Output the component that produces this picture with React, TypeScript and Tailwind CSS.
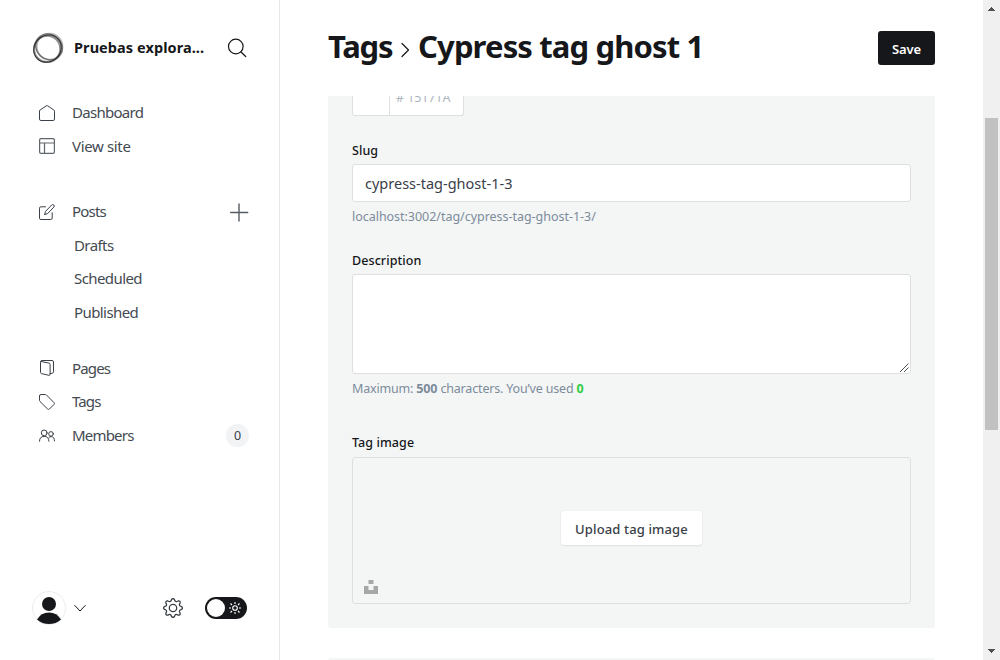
import type { ReactNode } from "react";

const stroke = { fill: "none", stroke: "currentColor", strokeLinecap: "round", strokeLinejoin: "round" } as const;

function Icon({ children }: { children: ReactNode }) {
  return (
    <svg className="h-4 w-4 shrink-0" viewBox="0 0 16 16" strokeWidth={1} {...stroke}>
      {children}
    </svg>
  );
}

const HomeIcon = () => (
  <Icon>
    <path d="M.5 6.200v7.900q0 1.400 1.400 1.400h12.200q1.400 0 1.400-1.400V6.200q0-.8-.6-1.200L8.800.9Q8 .3 7.200.9L1.100 5Q.5 5.400.5 6.200z" />
  </Icon>
);
const LayoutIcon = () => (
  <Icon>
    <g strokeWidth="1.200" opacity=".8">
      <rect x=".6" y=".6" width="14.800" height="14.800" rx="1.400" />
      <path d="M.6 5h14.800M5.500 5v10.400" />
    </g>
  </Icon>
);
const EditIcon = () => (
  <Icon>
    <path d="M13.200 8.800v5.300q0 1.400-1.400 1.400H1.900Q.5 15.500.5 14.100V4.200Q.5 2.800 1.900 2.800H6.500" />
    <path d="M5.800 10.400l.7-3L12.700 1q.9-.9 2-.1 1.100 1.100.1 2.200L8.700 9.600l-2.900.8z" />
  </Icon>
);
const PagesIcon = () => (
  <Icon>
    <path d="M2 1.500l8.200 1.600q.9.300.9 1.200v10q0 1.200-1.200 1L2.500 13.600q-1-.3-1-1.300V2.200Q1.500.5 3 .5h10q1.500 0 1.500 1.500v9.800q0 1.200-1.100 1.400l-2.300.4" />
  </Icon>
);
const TagIcon = () => (
  <Icon>
    <path d="M.5 2v4.400q0 .6.400 1L8.600 15q.9.900 1.800 0l4.600-4.600q.9-.9 0-1.800L7.400.9q-.4-.4-1-.4H2Q.5.500.5 2z" />
  </Icon>
);
const MembersIcon = () => (
  <Icon>
    <circle cx="5.200" cy="5.900" r="2.900" />
    <circle cx="12" cy="6.900" r="2.300" />
    <path d="M.5 14.200q0-4.800 4.700-4.800t4.700 4.800M10 10.400q1-.8 2-.8 3.500 0 3.500 4.300" />
  </Icon>
);

function NavItem({ icon, text, label, children }: { icon: ReactNode; text: string; label: string; children?: ReactNode }) {
  return (
    <div className="flex h-[33.500px] items-center pr-[30px] pl-[39px] text-[#394047]">
      {icon}
      <span className={"ml-[17px] text-[15px] whitespace-nowrap text-[#434a51] " + text}>{label}</span>
      {children}
    </div>
  );
}

function SubItem({ label }: { label: string }) {
  return <div className="h-[33.500px] pl-[74px] text-[15px] leading-[33px] tracking-[-0.580px] text-[#434a51]">{label}</div>;
}

function Sidebar() {
  return (
    <aside className="flex w-[280px] shrink-0 flex-col border-r border-[#e5e8ea]">
      <div className="flex h-[96px] items-center pl-8">
        <svg className="h-8 w-8" viewBox="0 0 32 32" fill="none" stroke="#333">
          <ellipse cx="15.500" cy="16.600" rx="14.300" ry="13" strokeWidth="1.100" transform="rotate(-40 15.500 16.600)" />
          <ellipse cx="17" cy="14.900" rx="14" ry="12.300" strokeWidth="1.400" opacity=".55" transform="rotate(40 17 14.900)" />
          <ellipse cx="15.200" cy="16.900" rx="13.100" ry="13.200" strokeWidth="2" opacity=".55" />
          <ellipse cx="17.500" cy="14.700" rx="12.900" ry="13" strokeWidth="2" opacity=".35" />
        </svg>
        <span className="ml-[10px] w-[132px] text-[14.500px] font-bold tracking-[0.070px] whitespace-nowrap text-[#15171a]">Pruebas explora...</span>
        <svg className="ml-[21px] h-5 w-5 text-[#15171a]" viewBox="0 0 20 20" strokeWidth="1.200" {...stroke}>
          <circle cx="8.800" cy="8.500" r="7.300" />
          <path d="M14 14l4.700 4.500" />
        </svg>
      </div>
      <nav className="flex flex-1 flex-col">
        <NavItem icon={<HomeIcon />} label="Dashboard" text="-mt-0.5 tracking-[-0.710px]" />
        <NavItem icon={<LayoutIcon />} label="View site" text="tracking-[-0.350px]" />
        <div className="h-8" />
        <NavItem icon={<EditIcon />} label="Posts" text="-mt-0.5 tracking-[-0.800px]">
          <svg className="mt-px ml-auto h-[19px] w-[19px]" viewBox="0 0 19 19" strokeWidth="1.400" opacity=".85" {...stroke}>
            <path d="M9 1v17M.7 9.500h17" />
          </svg>
        </NavItem>
        <SubItem label="Drafts" />
        <SubItem label="Scheduled" />
        <SubItem label="Published" />
        <div className="h-[22.500px]" />
        <NavItem icon={<PagesIcon />} label="Pages" text="-mt-px tracking-[-0.850px]" />
        <NavItem icon={<TagIcon />} label="Tags" text="-mt-px tracking-[-0.850px]" />
        <NavItem icon={<MembersIcon />} label="Members" text="-mt-px tracking-[-0.800px]">
          <span className="ml-auto flex h-[23px] w-[23px] items-center justify-center rounded-full bg-[#f1f3f4] pt-[2px] text-[12.500px] text-[#394047]">0</span>
        </NavItem>
      </nav>
      <div className="mb-[35px] flex h-[34px] items-center pl-8">
        <svg className="h-[34px] w-[34px]" viewBox="0 0 34 34">
          <circle cx="17" cy="17" r="16.500" fill="#fff" stroke="#e5e8ea" strokeWidth=".8" />
          <circle cx="17" cy="13" r="7" fill="#15171a" />
          <path d="M5 28.500Q9 21.500 17 21.500t12 7Q24 33 17 33T5 28.500z" fill="#15171a" />
        </svg>
        <svg className="ml-2 h-3 w-3 text-[#15171a]" viewBox="0 0 12 12" {...stroke}>
          <path d="M.8 3.500L6 9l5.200-5.500" />
        </svg>
        <svg className="ml-[77px] h-5 w-5 text-[#394047]" viewBox="0 0 20 20" strokeWidth="1.300" {...stroke}>
          <circle cx="10" cy="10" r="3.700" />
          <path d="M8.600 1.500Q10-.3 11.400 1.500L12 2.900q.7 1.100 2 .6l1.200-.5q2.300-.4 1.900 1.900l-.5 1.200q-.5 1.300.6 1.900l1.300.6q1.800 1.400 0 2.800l-1.300.6q-1.100.7-.6 2l.5 1.200q.4 2.200-1.900 1.900l-1.200-.5q-1.300-.5-2 .6l-.6 1.300q-1.400 1.800-2.800 0L8 17.200q-.7-1.100-2-.6l-1.200.5q-2.200.3-1.900-1.900l.5-1.200q.5-1.300-.6-2l-1.300-.6q-1.800-1.400 0-2.800L2.800 8q1.100-.6.6-1.900l-.5-1.200Q2.600 2.600 4.800 3l1.200.5q1.300.5 2-.6z" />
        </svg>
        <div className="ml-[22px] flex h-[22px] w-[42px] items-center rounded-full bg-[#15171a] pl-[2px]">
          <div className="h-[18px] w-[18px] rounded-full bg-white" />
          <svg className="ml-1 h-3 w-3" viewBox="0 0 12 12" fill="none" stroke="#fff" strokeWidth="1.100">
            <circle cx="6" cy="6" r="2.300" />
            <path d="M6 0v2M6 10v2M0 6h2M10 6h2M1.500 1.500l1.500 1.500M9 9l1.500 1.500M10.500 1.500L9 3M3 9l-1.500 1.500" />
          </svg>
        </div>
      </div>
    </aside>
  );
}

function Scrollbar() {
  return (
    <div className="flex h-full w-[17px] shrink-0 flex-col items-center bg-[#f0f0f0]">
      <svg className="h-[118px] w-[17px]" viewBox="0 0 17 118" shapeRendering="crispEdges">
        <path d="M5 11h7L8.500 7z" fill="#505050" />
      </svg>
      <div className="h-[312px] w-[13px] bg-[#c1c1c1]" />
      <svg className="mt-auto h-[17px] w-[17px]" viewBox="0 0 17 17" shapeRendering="crispEdges">
        <path d="M5 6h7L8.500 10z" fill="#505050" />
      </svg>
    </div>
  );
}

function Label({ children }: { children: ReactNode }) {
  return <div className="pt-px text-[12.500px] leading-[20px] font-medium tracking-[0.080px] text-[#15171a]">{children}</div>;
}

export default function App() {
  return (
    <div className="flex h-[660px] w-[1000px] overflow-hidden bg-white font-['Noto_Sans','Open_Sans',sans-serif]">
      <Sidebar />
      <main className="flex min-w-0 flex-1 flex-col pr-12 pl-12">
        <header className="flex h-[96px] shrink-0 items-center justify-between">
          <h1 className="flex items-center pb-1 text-[31px] leading-[40px] font-bold whitespace-nowrap text-[#15171a]">
            <span className="w-[65px] tracking-[-1.200px]">Tags</span>
            <svg className="mt-[7px] ml-[7px] h-4 w-[11px]" viewBox="0 0 11 16" strokeWidth="1.200" {...stroke}>
              <path d="M2 1.500L8.500 8 2 14.500" />
            </svg>
            <span className="ml-[7px] tracking-[-0.860px]">Cypress tag ghost 1</span>
          </h1>
          <button className="h-[34px] w-[57px] rounded-[3px] bg-[#15171a] pt-[3px] text-[13px] font-semibold tracking-[-0.100px] text-white">Save</button>
        </header>
        <div className="flex flex-1 flex-col overflow-hidden">
          <section className="h-[532px] shrink-0 rounded-b-[3px] bg-[#f4f6f6] px-6">
            <div className="flex h-[20px] w-[112px] overflow-hidden rounded-b-[3px] border border-t-0 border-[#dddfe1] bg-white">
              <div className="w-[37px] border-r border-[#dddfe1]" />
              <span className="-mt-[7px] ml-[6px] text-[12.500px] leading-[18px] tracking-[-0.100px] whitespace-nowrap text-[#abb4be]"># 15171A</span>
            </div>
            <div className="mt-[24px] h-[24px]">
              <Label>Slug</Label>
            </div>
            <div className="h-[38px] rounded-[3px] border border-[#dddfe1] bg-white px-3 text-[14.500px] leading-[37px] text-[#394047]">cypress-tag-ghost-1-3</div>
            <div className="mt-[5px] h-[19px] text-[12.500px] leading-5 tracking-[-0.030px] text-[#7c8b9a]">localhost:3002/tag/cypress-tag-ghost-1-3/</div>
            <div className="mt-[24px] h-[24px]">
              <Label>Description</Label>
            </div>
            <div className="flex h-[100px] items-end justify-end rounded-[3px] border border-[#dddfe1] bg-white">
              <svg className="h-[10px] w-[10px]" viewBox="0 0 10 10" stroke="#555" strokeWidth="1">
                <path d="M0 9L8.500 .5M4 9l4.500-4.500" />
              </svg>
            </div>
            <div className="mt-[5px] h-[19px] text-[12.500px] leading-5 tracking-[-0.170px] text-[#7c8b9a]">
              Maximum: <b>500</b> characters. You’ve used <b className="text-[#30cf43]">0</b>
            </div>
            <div className="mt-[34px] h-[25px]">
              <Label>Tag image</Label>
            </div>
            <div className="flex h-[147px] flex-col items-center rounded-[3px] border border-[#dddfe1] pt-[53px]">
              <button className="h-[34px] w-[141px] shrink-0 rounded-[3px] bg-white pt-[4px] text-[13px] font-medium tracking-[0.140px] whitespace-nowrap text-[#394047] shadow-[0_0_1px_rgba(0,0,0,0.12),0_1px_2px_rgba(0,0,0,0.08)]">Upload tag image</button>
              <svg className="mt-[35px] ml-[11px] h-[14px] w-[14px] self-start" viewBox="0 0 14 14" fill="#a5a8a8">
                <path d="M4.500 0h5v4h-5zM0 6h4.500v4h5V6H14v8H0z" />
              </svg>
            </div>
          </section>
          <section className="mt-[30px] h-10 shrink-0 rounded-t-[3px] bg-[#f4f6f6]" />
        </div>
      </main>
      <Scrollbar />
    </div>
  );
}
